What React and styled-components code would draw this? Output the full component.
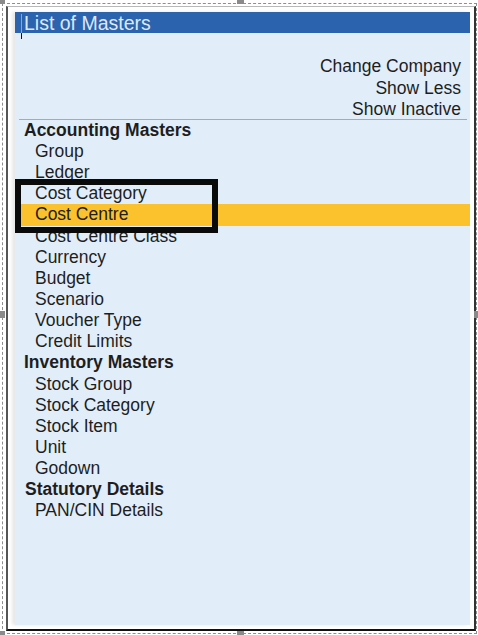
import React from 'react';
import styled, { createGlobalStyle } from 'styled-components';

const GlobalStyle = createGlobalStyle`
  html, body {
    margin: 0;
    padding: 0;
    background: #ffffff;
  }
  body {
    font-family: "Liberation Sans", Arial, sans-serif;
  }
`;

const Canvas = styled.div`
  position: relative;
  width: 478px;
  height: 635px;
  box-sizing: border-box;
  padding: 3px 0 0 2px;
  overflow: hidden;
  background: #ffffff;
`;

const Selection = styled.div`
  display: flex;
  width: 475px;
  height: 631px;
  box-sizing: border-box;
  border: 1px dashed #8e8e8e;
  padding: 2px 0 0 3px;
`;

const Frame = styled.div`
  display: flex;
  width: 470px;
  height: 625px;
  box-sizing: border-box;
  background: #ffffff;
  border-top: 1px solid #b8b8b8;
  border-left: 2px solid #555555;
  border-right: 2px solid #333333;
  border-bottom: 2px solid #111111;
  padding: 5px 0 0 7px;
`;

const Panel = styled.div`
  position: relative;
  display: flex;
  flex-direction: column;
  width: 455px;
  height: 613px;
  background: #e1eefa;
  box-shadow: -3px 0 3px #e8e8e8;
  color: #1e1e1e;
  font-size: 17.5px;
`;

const TitleBar = styled.div`
  position: relative;
  height: 21px;
  line-height: 22px;
  padding-left: 9px;
  background: #2b63ae;
  color: #dde8f5;
  font-size: 19.5px;
  white-space: nowrap;
`;

const Caret = styled.span`
  position: absolute;
  left: 6px;
  top: ${p => (p.$tail ? '21px' : '2px')};
  width: 1px;
  height: ${p => (p.$tail ? '6px' : '19px')};
  background: ${p => (p.$tail ? '#111' : '#d9954a')};
`;

const Body = styled.div`
  display: flex;
  flex-direction: column;
  padding-top: 23.4px;
`;

const Options = styled.div`
  display: flex;
  flex-direction: column;
  align-items: flex-end;
  padding-right: 9px;
`;

const Row = styled.div`
  height: 21.15px;
  line-height: 21.15px;
  white-space: nowrap;
  padding-left: ${p => (p.$header ? (p.$shift ? '10px' : '9px') : p.$option ? '0' : '20px')};
  font-weight: ${p => (p.$header ? 700 : 400)};
  background: ${p => (p.$active ? '#fcc22e' : 'transparent')};
`;

const Separator = styled.div`
  height: 1px;
  margin: -1px 3px 0 4px;
  background: #a4abb3;
`;

const Callout = styled.div`
  position: absolute;
  left: 0;
  top: 167px;
  width: 203px;
  height: 54px;
  box-sizing: border-box;
  border: 6px solid #0a0a0a;
  z-index: 2;
`;

const Handle = styled.span`
  position: absolute;
  width: 7px;
  height: 7px;
  background: #8a8a8a;
  left: ${p => p.$x - 3}px;
  top: ${p => p.$y - 3}px;
`;

const options = ['Change Company', 'Show Less', 'Show Inactive'];

const groups = [
  {
    title: 'Accounting Masters',
    items: ['Group', 'Ledger', 'Cost Category', 'Cost Centre', 'Cost Centre Class', 'Currency', 'Budget', 'Scenario', 'Voucher Type', 'Credit Limits'],
  },
  {
    title: 'Inventory Masters',
    items: ['Stock Group', 'Stock Category', 'Stock Item', 'Unit', 'Godown'],
  },
  {
    title: 'Statutory Details',
    shift: true,
    items: ['PAN/CIN Details'],
  },
];

const handles = [
  [1, 0], [240, 0], [1, 314], [477, 314], [1, 634], [240, 634],
];

export default function App() {
  return (
    <>
      <GlobalStyle />
      <Canvas>
        <Selection>
          <Frame>
            <Panel>
              <TitleBar>
                <Caret />
                <Caret $tail />
                List of Masters
              </TitleBar>
              <Body>
                <Options>
                  {options.map(o => (
                    <Row key={o} $option>{o}</Row>
                  ))}
                </Options>
                <Separator />
                {groups.map(g => (
                  <React.Fragment key={g.title}>
                    <Row $header $shift={g.shift}>{g.title}</Row>
                    {g.items.map(item => (
                      <Row key={item} $active={item === 'Cost Centre'}>{item}</Row>
                    ))}
                  </React.Fragment>
                ))}
              </Body>
              <Callout />
            </Panel>
          </Frame>
        </Selection>
        {handles.map(([x, y]) => (
          <Handle key={`${x}-${y}`} $x={x} $y={y} />
        ))}
      </Canvas>
    </>
  );
}
